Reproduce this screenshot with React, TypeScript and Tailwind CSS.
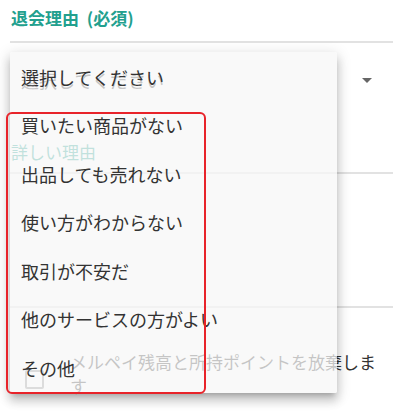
import React from "react";

const items = [
  "選択してください",
  "買いたい商品がない",
  "出品しても売れない",
  "使い方がわからない",
  "取引が不安だ",
  "他のサービスの方がよい",
  "その他",
];

export default function App() {
  return (
    <div
      className="relative w-[403px] h-[411px] overflow-hidden bg-white"
      style={{ fontFamily: '"Noto Sans CJK JP", "Noto Sans", sans-serif' }}
    >
      <div className="px-[10px]">
        <div className="pt-[8px] pl-[1px] text-[17px] leading-[20px] font-bold text-[#22a08e]">
          退会理由&nbsp;&nbsp;(必須)
        </div>
        <div className="mt-[13px] h-[2px] bg-[#e2e2e2]" />
        <div className="h-[99px] pt-[25px] pl-[11px] pr-[21px] flex items-start justify-between">
          <span className="text-[18px] leading-[24px] text-[#333]">選択してください</span>
          <svg width="10" height="5" viewBox="0 0 10 5" className="mt-[10px]">
            <path d="M0 0 L10 0 L5 5 Z" fill="#666" />
          </svg>
        </div>
        <div className="pl-[1px] text-[17px] leading-[20px] text-[#22a08e]">詳しい理由</div>
        <div className="mt-[10px] h-[2px] bg-[#e2e2e2]" />
        <div className="mt-[132px] h-[2px] bg-[#e2e2e2]" />
        <div className="mt-[42px] flex items-center">
          <div className="ml-[15px] mt-[10px] w-[19px] h-[19px] border-2 border-[#8a8a8a] rounded-[2px] shrink-0" />
          <div className="ml-[26px] w-[310px] text-[17px] leading-[24px] text-[#333]">
            メルペイ残高と所持ポイントを放棄します
          </div>
        </div>
      </div>

      <div className="absolute left-[10px] top-[52px] w-[327px] h-[341px] bg-[#f7f7f7]/75 rounded-[2px] shadow-[0px_5px_5px_-3px_rgba(0,0,0,0.2),0px_8px_10px_1px_rgba(0,0,0,0.14),0px_3px_14px_2px_rgba(0,0,0,0.12)]">
        <div className="pt-[1px]">
          {items.map((t) => (
            <div
              key={t}
              className="h-[48.5px] flex items-center pl-[11px] text-[18px] text-[#333]"
            >
              {t}
            </div>
          ))}
        </div>
      </div>

      <div className="absolute left-[6px] top-[112px] w-[200px] h-[282px] border-2 border-[#e8232a] rounded-[6px]" />
    </div>
  );
}
